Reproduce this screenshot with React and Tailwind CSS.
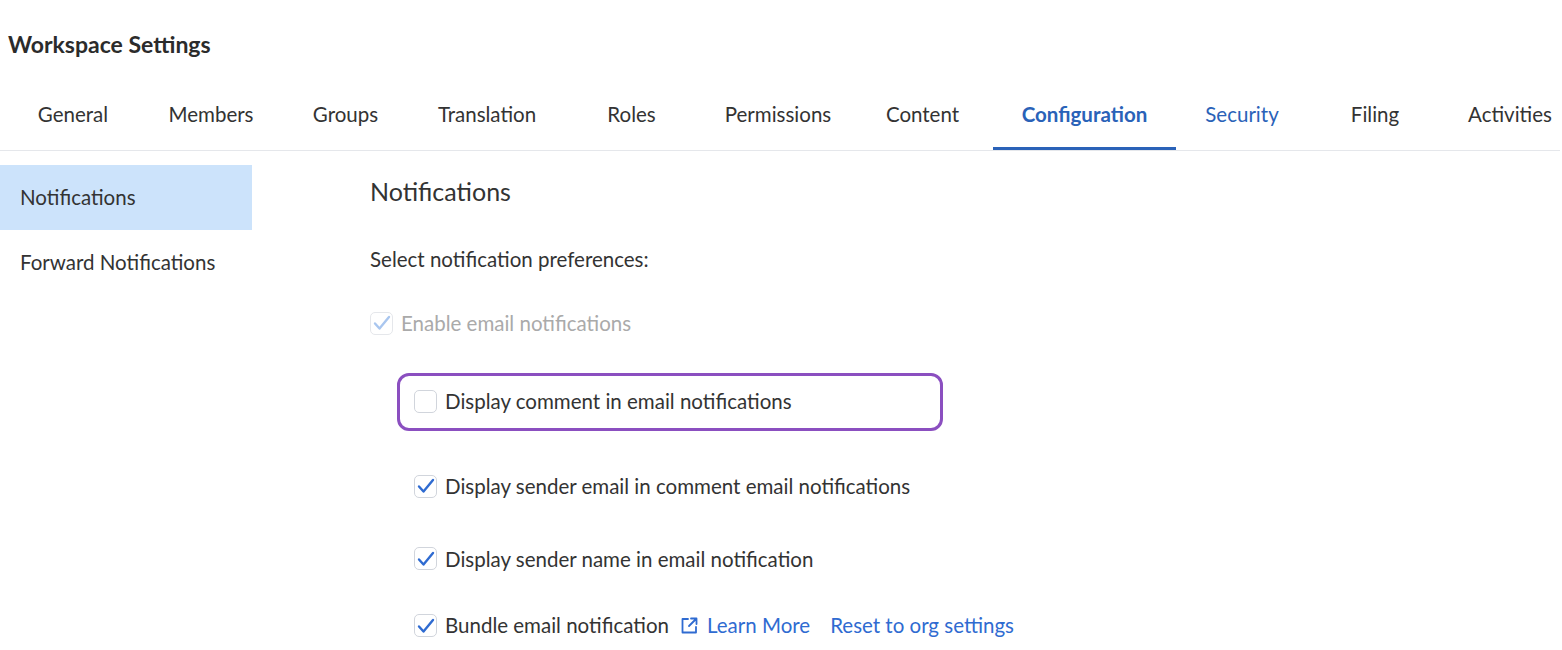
import React from "react";

const tabs = [
  ["General", "w-[146px]"],
  ["Members", "w-[130px]"],
  ["Groups", "w-[139px]"],
  ["Translation", "w-[144px]"],
  ["Roles", "w-[145px]"],
  ["Permissions", "w-[148px]"],
  ["Content", "w-[141px]"],
  ["Configuration", "w-[183px]"],
  ["Security", "w-[132px]"],
  ["Filing", "w-[134px]"],
  ["Activities", "w-[136px]"],
];

function Check({ checked, disabled }) {
  return (
    <span className={`inline-flex items-center justify-center w-[23px] h-[23px] rounded-[5px] border ${disabled ? "border-gray-200" : "border-gray-300"} bg-white shrink-0`}>
      {checked && (
        <svg width="20" height="20" viewBox="0 0 20 20" fill="none">
          <path d="M3 10.5l4.5 5L17 4" stroke={disabled ? "#a9c6ef" : "#2f6bd1"} strokeWidth="2.4" strokeLinecap="round" strokeLinejoin="round" />
        </svg>
      )}
    </span>
  );
}

export default function App() {
  return (
    <div className="w-[1562px] h-[650px] bg-white text-[#333] overflow-hidden" style={{ fontFamily: "Lato, 'Open Sans', sans-serif" }}>
      <h1 className="pl-[8px] pt-[30px] text-[23px] font-bold text-[#2b2b2b] leading-[28px]">Workspace Settings</h1>
      <div className="mt-[38px] flex border-b border-gray-200 mr-[2px]">
        {tabs.map(([t, w]) => {
          const active = t === "Configuration";
          const blue = active || t === "Security";
          return (
            <div key={t} className={`${w} shrink-0 text-center h-[54px] leading-[36px] text-[20.5px] ${blue ? "text-[#2a62b8]" : "text-[#333]"} ${active ? "font-bold border-b-[3px] border-[#2a62b8]" : ""}`}>{t}</div>
          );
        })}
      </div>
      <div className="flex mt-[14px]">
        <div className="w-[252px] shrink-0 text-[20.5px]">
          <div className="h-[65px] bg-[#cce3fb] pl-[20px] flex items-center">Notifications</div>
          <div className="h-[65px] pl-[20px] flex items-center">Forward Notifications</div>
        </div>
        <div className="ml-[118px] pt-[10px] text-[20.5px]">
          <div className="text-[25px] leading-[32px]">Notifications</div>
          <div className="mt-[40px] leading-[24px]">Select notification preferences:</div>
          <div className="mt-[37px] flex items-center gap-[8px] text-[#aaa]">
            <Check checked disabled />
            <span>Enable email notifications</span>
          </div>
          <div className="mt-[34px] ml-[27px] w-[546px] h-[58px] border-[3px] border-[#8b4fc0] rounded-[12px] flex items-center gap-[8px] pl-[14px]">
            <Check />
            <span>Display comment in email notifications</span>
          </div>
          <div className="ml-[44px] mt-[40px] flex items-center gap-[8px]">
            <Check checked />
            <span>Display sender email in comment email notifications</span>
          </div>
          <div className="ml-[44px] mt-[42px] flex items-center gap-[8px]">
            <Check checked />
            <span>Display sender name in email notification</span>
          </div>
          <div className="ml-[44px] mt-[36px] flex items-center gap-[8px]">
            <Check checked />
            <span>Bundle email notification</span>
            <span className="flex items-center gap-[8px] text-[#2f6bd1] ml-[2px]">
              <svg width="20" height="20" viewBox="0 0 20 20" fill="none" stroke="#2f6bd1" strokeWidth="1.8" strokeLinecap="round" strokeLinejoin="round">
                <path d="M9 3H3.5v13.5H17V11" />
                <path d="M12 2.5h5.5V8M17.5 2.5L10 10" />
              </svg>
              <span>Learn More</span>
            </span>
            <span className="text-[#2f6bd1] ml-[12px]">Reset to org settings</span>
          </div>
        </div>
      </div>
    </div>
  );
}
